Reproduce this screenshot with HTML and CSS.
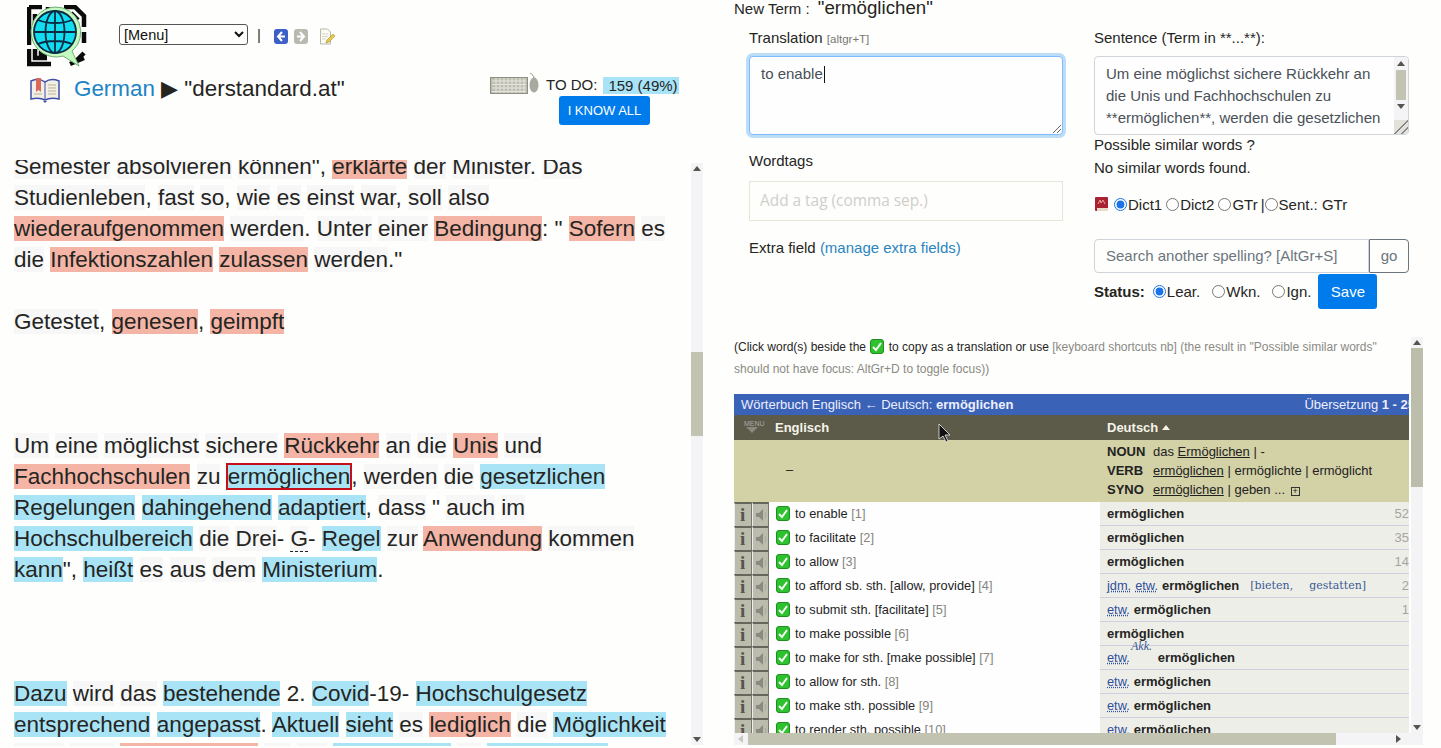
FILE: index.html
```html
<!DOCTYPE html>
<html lang="en">
<head>
    <meta charset="UTF-8">
    <meta name="viewport" content="width=device-width, initial-scale=1.0">
    <title>New Term</title>
    <link rel="stylesheet" href="styles.css">
</head>
<body>
    <svg class="defs" width="0" height="0">
        <symbol id="check" viewBox="0 0 14 15">
            <rect x="0.5" y="0.5" width="13" height="14" rx="2.5" fill="#2fc12f" stroke="#1c8f1c"/>
            <path d="M3 8l3 3 5-7" fill="none" stroke="#f4fff4" stroke-width="2"/>
        </symbol>
        <symbol id="speaker" viewBox="0 0 17 22">
            <path d="M3 9h3l4-4v12l-4-4H3z" fill="#8a8a80"/>
            <path d="M12 8c1 2 1 4 0 6" fill="none" stroke="#a5a59a"/>
        </symbol>
    </svg>

    <div class="left">
        <div class="top">
            <div class="top-row">
                <svg class="logo" width="60" height="62" viewBox="0 0 60 62">
                    <g fill="none" stroke="#0b0b0b" stroke-width="4.5">
                        <path d="M2 2h13M2 2v38M8 9v12M21 2v6M29 2v5M37 2h11l9 9v11M44 8l7 7M57 27v11M2 44v15h22M8 44v9h12M14 46v3h6M49 56l8-8M43 59l14-6"/>
                    </g>
                    <path d="M28 2a25 25 0 1 0 8 49l16 10-7-15a25 25 0 0 0-17-44z" fill="#c4fac0" stroke="#6fae78"/>
                    <circle cx="28" cy="27" r="21" fill="#11dcf0" stroke="#0b2a44" stroke-width="1.8"/>
                    <g fill="none" stroke="#0b2a44" stroke-width="1.8">
                        <ellipse cx="28" cy="27" rx="9.500" ry="21"/>
                        <path d="M28 6v42M7 27h42M11 15c9 4 25 4 34 0M11 39c9-4 25-4 34 0"/>
                    </g>
                </svg>
                <select class="menu"><option>[Menu]</option></select>
                <span class="pipe">|</span>
                <svg class="nav-icon back" width="14" height="15" viewBox="0 0 14 15">
                    <rect width="14" height="15" rx="3" fill="#3c5fc8"/>
                    <path d="M8 3L4 7.5 8 12M4 7.5h7" fill="none" stroke="#fff" stroke-width="2"/>
                </svg>
                <svg class="nav-icon" width="14" height="15" viewBox="0 0 14 15">
                    <rect width="14" height="15" rx="3" fill="#b9b9b0"/>
                    <path d="M6 3l4 4.5L6 12M10 7.5H3" fill="none" stroke="#fff" stroke-width="2"/>
                </svg>
                <svg class="note-icon" width="16" height="17" viewBox="0 0 16 17">
                    <path d="M1.5 1h7l3 3v12h-10z" fill="#fbfbf0" stroke="#b8b8b0"/>
                    <path d="M3 6h6M3 8.500h6M3 11h4" stroke="#d5d5cc"/>
                    <path d="M7 15l1-3 6-6 2 2-6 6z" fill="#e9c94a" stroke="#a08a30" stroke-width="0.600"/>
                </svg>
            </div>
            <div class="top-row2">
                <svg class="book" width="30" height="26" viewBox="0 0 30 26">
                    <path d="M1 4c5-2 10-2 14 1 4-3 9-3 14-1v18c-5-1-10-1-14 1-4-2-9-2-14-1z" fill="#f1efe6" stroke="#3f4fa8" stroke-width="1.500"/>
                    <path d="M15 5v18" stroke="#3f4fa8"/>
                    <path d="M6 1h5v14l-2.500-2L6 15z" fill="#d9695a"/>
                    <path d="M18 8h8M18 11h8M18 14h8M18 17h8M4 17h8" stroke="#b9b48d"/>
                    <path d="M13 24h4l-2 2z" fill="#3f4fa8"/>
                </svg>
                <div class="title"><a class="lang">German</a> ▶ "derstandard.at"</div>
                <div class="todo-box">
                    <div class="todo-line">
                        <svg width="50" height="22" viewBox="0 0 50 22">
                            <rect x="0.500" y="4.500" width="37" height="16" fill="#bdbdb2" stroke="#8f8f86"/>
                            <path d="M2 8h34M2 11.500h34M2 15h34M2 18.500h34M6 5v15M10 5v15M14 5v15M18 5v15M22 5v15M26 5v15M30 5v15M34 5v15" stroke="#e6e6de"/>
                            <ellipse cx="44" cy="12" rx="4.500" ry="7.500" fill="#a9a99f"/>
                            <path d="M44 5C44 3 42 1 40 0" fill="none" stroke="#8f8f86"/>
                        </svg>
                        <span class="todo-label">TO DO:</span>
                        <span class="todo-count">159 (49%)</span>
                    </div>
                    <button class="btn know">I KNOW ALL</button>
                </div>
            </div>
        </div>

        <div class="reader">
            <div class="reader-text">
                <span class="w">Semester</span> <span class="w">absolvieren</span> <span class="w">können</span>", <span class="r">erklärte</span> <span class="w">der</span> <span class="w">Minister</span>. <span class="w">Das</span>
                <span class="w">Studienleben</span>, <span class="w">fast</span> <span class="w">so</span>, <span class="w">wie</span> <span class="w">es</span> <span class="w">einst</span> <span class="w">war</span>, <span class="w">soll</span> <span class="w">also</span>
                <span class="r">wiederaufgenommen</span> <span class="w">werden</span>. <span class="w">Unter</span> <span class="w">einer</span> <span class="r">Bedingung</span>: " <span class="r">Sofern</span> <span class="w">es</span>
                <span class="w">die</span> <span class="r">Infektionszahlen</span> <span class="r">zulassen</span> <span class="w">werden</span>."
                <br><br>
                <span class="w">Getestet</span>, <span class="r">genesen</span>, <span class="r">geimpft</span>
                <br><br><br><br>
                <span class="w">Um</span> <span class="w">eine</span> <span class="w">möglichst</span> <span class="w">sichere</span> <span class="r">Rückkehr</span> <span class="w">an</span> <span class="w">die</span> <span class="r">Unis</span> <span class="w">und</span>
                <span class="r">Fachhochschulen</span> <span class="w">zu</span> <span class="b current">ermöglichen</span>, <span class="w">werden</span> <span class="w">die</span> <span class="b">gesetzlichen</span>
                <span class="b">Regelungen</span> <span class="b">dahingehend</span> <span class="b">adaptiert</span>, <span class="w">dass</span> " <span class="w">auch</span> <span class="w">im</span>
                <span class="b">Hochschulbereich</span> <span class="w">die</span> <span class="w">Drei</span>- <span class="w abbr">G</span>- <span class="b">Regel</span> <span class="w">zur</span> <span class="r">Anwendung</span> <span class="w">kommen</span>
                <span class="b">kann</span>", <span class="b">heißt</span> <span class="w">es</span> <span class="w">aus</span> <span class="w">dem</span> <span class="b">Ministerium</span>.
                <br><br><br><br>
                <span class="b">Dazu</span> <span class="w">wird</span> <span class="w">das</span> <span class="b">bestehende</span> 2. <span class="b">Covid</span>-19- <span class="b">Hochschulgesetz</span>
                <span class="b">entsprechend</span> <span class="b">angepasst</span>. <span class="b">Aktuell</span> <span class="b">sieht</span> <span class="w">es</span> <span class="r">lediglich</span> <span class="w">die</span> <span class="b">Möglichkeit</span>
                <span class="w">einer</span> <span class="w">sehr</span> <span class="r">Zugangsregel</span> <span class="w">für</span> <span class="w">die</span> <span class="b">Hochschule</span> <span class="w">zu</span> <span class="b">Studierende</span>
            </div>
            <div class="sbar reader-bar">
                <i class="arrow up"></i>
                <div class="track"><div class="thumb"></div></div>
                <i class="arrow down"></i>
            </div>
        </div>
    </div>

    <div class="right">
        <div class="term-line"><span class="term-label">New Term :</span> <span class="term">"ermöglichen"</span></div>

        <div class="form">
            <div class="col">
                <div class="lbl">Translation <small class="hint">[altgr+T]</small></div>
                <div class="box focus">to enable<span class="caret"></span><i class="grip"></i></div>
                <div class="lbl tags-lbl">Wordtags</div>
                <div class="tag-input">Add a tag (comma sep.)</div>
                <div class="lbl extra-lbl">Extra field <a class="link">(manage extra fields)</a></div>
            </div>
            <div class="col">
                <div class="lbl">Sentence (Term in **...**):</div>
                <div class="box sentence">
                    <div class="sentence-text">Um eine möglichst sichere Rückkehr an die Unis und Fachhochschulen zu **ermöglichen**, werden die gesetzlichen Regelungen</div>
                    <div class="sbar sentence-bar">
                        <i class="arrow up"></i>
                        <div class="track"><div class="thumb"></div></div>
                        <i class="arrow down"></i>
                        <i class="grip"></i>
                    </div>
                </div>
                <div class="similar">Possible similar words ?</div>
                <div class="similar">No similar words found.</div>
                <div class="dict-row">
                    <svg width="16" height="16" viewBox="0 0 16 16">
                        <rect x="1" y="1" width="13" height="14" rx="1" fill="#a82232"/>
                        <path d="M3 12h11v3H3z" fill="#e9d9c9"/>
                        <path d="M4 8l2-4 1 3 2-3 2 4" fill="none" stroke="#e8a0a0"/>
                    </svg>
                    <label class="rad"><input type="radio" name="dict" checked>Dict1</label>
                    <label class="rad"><input type="radio" name="dict">Dict2</label>
                    <label class="rad tight"><input type="radio" name="dict">GTr</label>
                    <span>|</span>
                    <label class="rad"><input type="radio" name="dict">Sent.: GTr</label>
                </div>
                <div class="search">
                    <div class="search-input">Search another spelling? [AltGr+S]</div>
                    <div class="search-go">go</div>
                </div>
                <div class="status-row">
                    <b class="status-lbl">Status:</b>
                    <label class="rad lear"><input type="radio" name="status" checked>Lear.</label>
                    <label class="rad wkn"><input type="radio" name="status">Wkn.</label>
                    <label class="rad ign"><input type="radio" name="status">Ign.</label>
                    <button class="btn save">Save</button>
                </div>
            </div>
        </div>

        <div class="dict">
            <div class="dict-view">
                <div class="dict-content">
                    <div class="note">(Click word(s) beside the <svg class="note-check" width="14" height="15"><use href="#check"/></svg> to copy as a translation or use <span class="grey">[keyboard shortcuts nb] (the result in "Possible similar words" should not have focus: AltGr+D to toggle focus))</span></div>
                    <div class="tbl">
                        <div class="tbl-title">
                            <span>Wörterbuch Englisch ← Deutsch: <b>ermöglichen</b></span>
                            <span>Übersetzung <b>1 - 25</b></span>
                        </div>
                        <div class="tbl-head">
                            <div class="head-en"><span class="mini-menu">MENU</span>Englisch</div>
                            <div class="head-de">Deutsch <i class="sort"></i></div>
                        </div>
                        <div class="tbl-sum">
                            <div class="sum-en">–</div>
                            <div class="sum-de">
                                <div><b>NOUN</b><span>das <u>Ermöglichen</u> | -</span></div>
                                <div><b>VERB</b><span><u>ermöglichen</u> | ermöglichte | ermöglicht</span></div>
                                <div><b>SYNO</b><span><u>ermöglichen</u> | geben ... <i class="plus">+</i></span></div>
                            </div>
                        </div>

                        <div class="row">
                            <div class="en"><span class="ib">i</span><span class="ib"><svg width="17" height="22"><use href="#speaker"/></svg></span><svg class="ok" width="14" height="15"><use href="#check"/></svg>to enable <em>[1]</em></div>
                            <div class="de"><b>ermöglichen</b><span class="num">52</span></div>
                        </div>
                        <div class="row">
                            <div class="en"><span class="ib">i</span><span class="ib"><svg width="17" height="22"><use href="#speaker"/></svg></span><svg class="ok" width="14" height="15"><use href="#check"/></svg>to facilitate <em>[2]</em></div>
                            <div class="de"><b>ermöglichen</b><span class="num">35</span></div>
                        </div>
                        <div class="row">
                            <div class="en"><span class="ib">i</span><span class="ib"><svg width="17" height="22"><use href="#speaker"/></svg></span><svg class="ok" width="14" height="15"><use href="#check"/></svg>to allow <em>[3]</em></div>
                            <div class="de"><b>ermöglichen</b><span class="num">14</span></div>
                        </div>
                        <div class="row">
                            <div class="en"><span class="ib">i</span><span class="ib"><svg width="17" height="22"><use href="#speaker"/></svg></span><svg class="ok" width="14" height="15"><use href="#check"/></svg>to afford sb. sth. [allow, provide] <em>[4]</em></div>
                            <div class="de"><span class="gram">jdm.</span> <span class="gram">etw.</span> <b>ermöglichen</b><span class="ctx">[bieten,</span><span class="ctx ctx2">gestatten]</span><span class="num">2</span></div>
                        </div>
                        <div class="row">
                            <div class="en"><span class="ib">i</span><span class="ib"><svg width="17" height="22"><use href="#speaker"/></svg></span><svg class="ok" width="14" height="15"><use href="#check"/></svg>to submit sth. [facilitate] <em>[5]</em></div>
                            <div class="de"><span class="gram">etw.</span> <b>ermöglichen</b><span class="num">1</span></div>
                        </div>
                        <div class="row">
                            <div class="en"><span class="ib">i</span><span class="ib"><svg width="17" height="22"><use href="#speaker"/></svg></span><svg class="ok" width="14" height="15"><use href="#check"/></svg>to make possible <em>[6]</em></div>
                            <div class="de"><b>ermöglichen</b></div>
                        </div>
                        <div class="row">
                            <div class="en"><span class="ib">i</span><span class="ib"><svg width="17" height="22"><use href="#speaker"/></svg></span><svg class="ok" width="14" height="15"><use href="#check"/></svg>to make for sth. [make possible] <em>[7]</em></div>
                            <div class="de"><span class="gram">etw.</span><span class="akk">Akk.</span><b class="after-akk">ermöglichen</b></div>
                        </div>
                        <div class="row">
                            <div class="en"><span class="ib">i</span><span class="ib"><svg width="17" height="22"><use href="#speaker"/></svg></span><svg class="ok" width="14" height="15"><use href="#check"/></svg>to allow for sth. <em>[8]</em></div>
                            <div class="de"><span class="gram">etw.</span> <b>ermöglichen</b></div>
                        </div>
                        <div class="row">
                            <div class="en"><span class="ib">i</span><span class="ib"><svg width="17" height="22"><use href="#speaker"/></svg></span><svg class="ok" width="14" height="15"><use href="#check"/></svg>to make sth. possible <em>[9]</em></div>
                            <div class="de"><span class="gram">etw.</span> <b>ermöglichen</b></div>
                        </div>
                        <div class="row">
                            <div class="en"><span class="ib">i</span><span class="ib"><svg width="17" height="22"><use href="#speaker"/></svg></span><svg class="ok" width="14" height="15"><use href="#check"/></svg>to render sth. possible <em>[10]</em></div>
                            <div class="de"><span class="gram">etw.</span> <b>ermöglichen</b></div>
                        </div>
                    </div>
                </div>
                <div class="sbar dict-bar">
                    <i class="arrow up"></i>
                    <div class="track"><div class="thumb"></div></div>
                    <i class="arrow down"></i>
                </div>
            </div>
            <div class="hbar">
                <i class="arrow lft"></i>
                <div class="hthumb"></div>
                <i class="arrow rgt"></i>
            </div>
            <svg class="cursor" width="14" height="20" viewBox="0 0 14 20">
                <path d="M1 1v15l4-3 3 6 2-1-3-6h5z" fill="#111" stroke="#eee" stroke-width="0.800"/>
            </svg>
        </div>
    </div>
</body>
</html>
```

FILE: styles.css
```css
html, body {
    margin: 0;
    padding: 0;
    height: 100%;
    overflow: hidden;
    font-family: 'Liberation Sans', Arial, sans-serif;
    color: #25251f;
    background-color: #fefefc;
}
body {
    display: flex;
    height: 748px;
}
.defs {
    position: absolute;
}

/* left frame */
.left {
    width: 704px;
    height: 746px;
    display: flex;
    flex-direction: column;
    flex-shrink: 0;
}
.top {
    height: 160px;
    flex-shrink: 0;
}
.top-row {
    display: flex;
    align-items: center;
    padding: 5px 0 0 27px;
    height: 62px;
}
.logo {
    flex-shrink: 0;
}
.menu {
    width: 129px;
    height: 21px;
    margin: -3px 0 0 32px;
    font-family: 'Liberation Sans', Arial, sans-serif;
    font-size: 14.5px;
    color: #111;
    background: #fefefc;
    border: 1px solid #555;
    border-radius: 3px;
}
.pipe {
    margin: -3px 0 0 9px;
    font-size: 15px;
    color: #333;
}
.nav-icon {
    margin: 0 0 0 6px;
}
.nav-icon.back {
    margin-left: 13px;
}
.note-icon {
    margin: 0 0 0 11px;
}
.top-row2 {
    display: flex;
    padding-left: 30px;
    margin-top: 9px;
}
.book {
    margin-top: 1px;
    flex-shrink: 0;
}
.title {
    margin-left: 14px;
    font-size: 22.4px;
    line-height: 26px;
    white-space: nowrap;
    width: 416px;
}
.lang {
    color: #1c84c6;
}
.todo-box {
    display: flex;
    flex-direction: column;
    width: 190px;
}
.todo-line {
    display: flex;
    align-items: center;
    height: 22px;
    font-size: 15px;
    white-space: nowrap;
    margin-top: -3px;
}
.todo-label {
    margin-left: 6px;
    margin-right: 6px;
}
.todo-count {
    background: #a8e3f7;
    padding: 0 1px 0 5px;
    margin-top: 3px;
}
.btn {
    border: 0;
    border-radius: 3px;
    background: #007bec;
    color: #fff;
    font-family: 'Liberation Sans', Arial, sans-serif;
    padding: 0;
}
.know {
    align-self: flex-end;
    width: 91px;
    height: 29px;
    font-size: 13px;
    margin: 1px 30px 0 0;
}
.reader {
    flex: 1;
    display: flex;
    overflow: hidden;
}
.reader-text {
    width: 662px;
    margin: -9px 15px 0 14px;
    font-size: 22.5px;
    line-height: 31px;
    flex-shrink: 0;
}
.w {
    background: #f7f7f7;
}
.r {
    background: #f4b5a7;
}
.b {
    background: #a9e4f6;
}
.current {
    outline: 2px solid #c4101c;
    outline-offset: -1px;
    padding: 0 1px;
}
.abbr {
    border-bottom: 1px dashed #222;
}

/* scrollbars */
.sbar {
    display: flex;
    flex-direction: column;
    width: 12px;
    flex-shrink: 0;
    background: #f4f4f7;
}
.track {
    flex: 1;
}
.thumb {
    background: #c3c3b2;
}
.arrow {
    display: block;
    width: 0;
    height: 0;
    flex-shrink: 0;
    margin: 3px auto;
    border: 4px solid transparent;
}
.arrow.up {
    border-top: 0;
    border-bottom: 5px solid #55554e;
}
.arrow.down {
    border-bottom: 0;
    border-top: 5px solid #55554e;
}
.arrow.lft {
    border-left: 0;
    border-right: 5px solid #c8c8c0;
    margin: 2px 4px;
}
.arrow.rgt {
    border-right: 0;
    border-left: 5px solid #55554e;
    margin: 2px 4px;
}
.reader-bar {
    margin: 3px 0 1px 0;
}
.reader-bar .thumb {
    height: 84px;
    margin-top: 178px;
}

/* right frame */
.right {
    flex: 1;
    position: relative;
    padding-left: 30px;
    font-size: 15px;
}
.term-line {
    height: 16px;
    line-height: 16px;
    white-space: nowrap;
    overflow: visible;
}
.term {
    font-size: 18.7px;
    margin-left: 4px;
}
.form {
    display: flex;
    gap: 31px;
    padding: 12px 0 0 15px;
    height: 309px;
}
.col {
    width: 314px;
}
.col + .col {
    width: 315px;
}
.lbl {
    line-height: 20px;
    height: 20px;
}
.hint {
    font-size: 11.5px;
    color: #777;
}
.box {
    position: relative;
    box-sizing: border-box;
    height: 79px;
    margin-top: 8px;
    border: 1px solid #ced4da;
    border-radius: 4px;
    background: #fefefe;
    color: #495057;
}
.focus {
    padding: 5px 11px;
    line-height: 23px;
    border-color: #80bdff;
    box-shadow: 0 0 0 3px #bcdcf8;
}
.caret {
    display: inline-block;
    width: 1px;
    height: 17px;
    margin-left: 1px;
    background: #111;
    vertical-align: -4px;
}
.grip {
    position: absolute;
    right: 1px;
    bottom: 1px;
    width: 9px;
    height: 9px;
    background: linear-gradient(135deg, transparent 50%, #666 50%, #666 58%, transparent 58%, transparent 74%, #666 74%, #666 82%, transparent 82%);
}
.sentence {
    display: flex;
    overflow: hidden;
}
.sentence-text {
    flex: 1;
    padding: 6px 11px;
    line-height: 22px;
    height: 66px;
    overflow: hidden;
}
.sentence-bar {
    position: relative;
    width: 14px;
}
.sentence-bar .arrow {
    margin: 4px auto;
}
.sentence-bar .track {
    flex: none;
    height: 30px;
}
.sentence-bar .thumb {
    height: 30px;
    width: 10px;
    margin: 0 auto;
}
.sentence-bar .grip {
    background: linear-gradient(135deg, #e2e2da 50%, #888 50%, #888 56%, #e2e2da 56%, #e2e2da 74%, #888 74%, #888 80%, #e2e2da 80%);
    width: 14px;
    height: 14px;
    right: 0;
    bottom: 0;
}
.similar {
    line-height: 23px;
}
.box + .similar {
    margin-top: -2px;
}
.tags-lbl {
    margin-top: 16px;
}
.tag-input {
    box-sizing: border-box;
    height: 40px;
    margin-top: 10px;
    padding: 0 10px;
    line-height: 38px;
    border: 1px solid #e6e6d6;
    color: #cfcfca;
    font-family: 'Open Sans', sans-serif;
    font-size: 15.4px;
    white-space: nowrap;
}
.extra-lbl {
    margin-top: 17px;
}
.link {
    color: #2a85c0;
}
.dict-row {
    display: flex;
    align-items: center;
    height: 22px;
    margin-top: 14px;
    white-space: nowrap;
}
.rad {
    display: inline-flex;
    align-items: center;
}
.rad input {
    width: 13px;
    height: 13px;
    margin: 0 1px 0 0;
    accent-color: #1b73e8;
}
.dict-row svg {
    margin-right: 4px;
}
.dict-row .rad {
    margin-right: 4px;
}
.dict-row .tight {
    margin-right: 3px;
}
.search {
    display: flex;
    height: 34px;
    margin-top: 24px;
}
.search-input {
    flex: 1;
    box-sizing: border-box;
    padding: 0 11px;
    line-height: 32px;
    border: 1px solid #ced4da;
    border-radius: 4px 0 0 4px;
    color: #6c757d;
    white-space: nowrap;
}
.search-go {
    box-sizing: border-box;
    width: 40px;
    text-align: center;
    line-height: 32px;
    border: 1px solid #6c757d;
    border-radius: 0 4px 4px 0;
    color: #6c757d;
}
.status-row {
    display: flex;
    align-items: center;
    height: 35px;
    margin-top: 1px;
    white-space: nowrap;
}
.status-row .rad {
    margin-left: 8px;
}
.status-row .wkn, .status-row .ign {
    margin-left: 12px;
}
.save {
    width: 59px;
    height: 35px;
    margin-left: 7px;
    font-size: 15px;
}

/* dictionary */
.dict {
    position: relative;
    width: 689px;
    height: 408px;
}
.dict-view {
    display: flex;
    justify-content: space-between;
    height: 396px;
}
.dict-content {
    width: 675px;
    overflow: hidden;
}
.note {
    width: 660px;
    font-size: 12px;
    line-height: 22px;
    margin-top: -1px;
    height: 58px;
}
.note-check {
    vertical-align: -3px;
    margin: 0 1px;
}
.grey {
    color: #8a8a84;
}
.tbl {
    width: 690px;
    font-size: 12.8px;
}
.tbl-title {
    display: flex;
    justify-content: space-between;
    height: 21px;
    line-height: 21px;
    padding: 0 9px 0 7px;
    background: #3a62b6;
    color: #eef;
    font-size: 13px;
    white-space: nowrap;
}
.tbl-head {
    display: flex;
    height: 25px;
    line-height: 25px;
    background: #5c5a48;
    color: #f4f4e8;
    font-size: 13px;
    font-weight: bold;
}
.head-en, .sum-en, .en {
    width: 366px;
    flex-shrink: 0;
}
.head-en {
    display: flex;
}
.mini-menu {
    position: relative;
    width: 41px;
    padding-left: 10px;
    box-sizing: border-box;
    font-size: 7px;
    font-weight: normal;
    color: #aaa;
    line-height: 18px;
}
.mini-menu::after {
    content: "";
    position: absolute;
    left: 12px;
    top: 12px;
    border: 6px solid transparent;
    border-bottom: 0;
    border-top: 6px solid #8a8a7c;
}
.head-de {
    padding-left: 7px;
}
.sort {
    display: inline-block;
    border: 4px solid transparent;
    border-top: 0;
    border-bottom: 5px solid #f4f4e8;
    vertical-align: 2px;
}
.tbl-sum {
    display: flex;
    height: 62px;
    background: #d3d1a6;
    color: #222;
}
.sum-en {
    line-height: 60px;
    padding-left: 52px;
    box-sizing: border-box;
}
.sum-de {
    padding: 2px 0 0 7px;
    font-size: 13px;
    line-height: 19px;
    white-space: nowrap;
}
.sum-de b {
    display: inline-block;
    width: 46px;
}
.plus {
    display: inline-block;
    width: 7px;
    height: 7px;
    border: 1px solid #333;
    font-size: 9px;
    line-height: 7px;
    text-align: center;
    font-style: normal;
    margin-left: 2px;
}
.row {
    display: flex;
    height: 24px;
}
.en {
    display: flex;
    align-items: center;
    box-sizing: border-box;
    height: 24px;
    padding-bottom: 2px;
    background: #fefefe;
    white-space: pre;
}
.en em {
    font-style: normal;
    color: #85857c;
}
.ib {
    align-self: flex-start;
    box-sizing: border-box;
    width: 17.500px;
    height: 24px;
    border-top: 2px solid #66665a;
    background: #bcbcac;
    border-left: 1px solid #eee;
    border-right: 1px solid #77776e;
    text-align: center;
    font: bold 19px/21px 'Liberation Serif', serif;
    color: #55554a;
}
.ok {
    margin: 0 5px 0 7px;
}
.de {
    flex: 1;
    display: flex;
    align-items: center;
    gap: 4px;
    position: relative;
    padding: 0 15px 0 7px;
    background: #eeeee8;
    border-bottom: 1px solid #cfcfe0;
    font-size: 13px;
    white-space: nowrap;
}
.num {
    margin-left: auto;
    color: #a5a5a0;
}
.gram {
    font-size: 12.8px;
    color: #2f4f9c;
    text-decoration: underline dotted;
}
.ctx {
    margin-left: 7px;
    font-family: 'DejaVu Serif', serif;
    font-size: 11px;
    color: #3a5a94;
}
.ctx2 {
    margin-left: 12px;
}
.akk {
    position: absolute;
    left: 31px;
    top: -7px;
    font-family: 'Liberation Serif', serif;
    font-size: 12px;
    font-style: italic;
    color: #3a5a94;
}
.after-akk {
    margin-left: 24px;
}
.dict-bar .arrow.up {
    margin-bottom: 3px;
}
.dict-bar .thumb {
    height: 139px;
    background: #bdbdac;
}
.hbar {
    display: flex;
    align-items: center;
    height: 12px;
    background: #f4f4f7;
}
.hthumb {
    width: 588px;
    height: 12px;
    margin-left: 1px;
    background: #c3c3b2;
}
.hbar .rgt {
    margin-left: 60px;
}
.cursor {
    position: absolute;
    left: 204px;
    top: 86px;
}
```
